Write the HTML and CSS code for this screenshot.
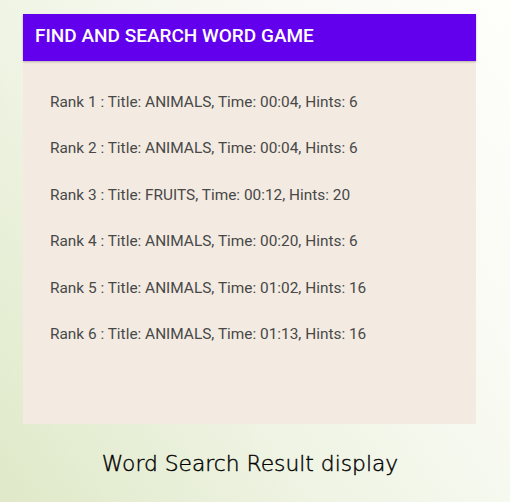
FILE: index.html
```html
<!DOCTYPE html>
<html>
<head>
<meta charset="utf-8">
<link rel="stylesheet" href="styles.css">
</head>
<body>
<div class="page">
  <div class="phone">
    <div class="appbar">FIND AND SEARCH WORD GAME</div>
    <div class="list">
      <div class="row">Rank 1 : Title: ANIMALS, Time: 00:04, Hints: 6</div>
      <div class="row">Rank 2 : Title: ANIMALS, Time: 00:04, Hints: 6</div>
      <div class="row">Rank 3 : Title: FRUITS, Time: 00:12, Hints: 20</div>
      <div class="row">Rank 4 : Title: ANIMALS, Time: 00:20, Hints: 6</div>
      <div class="row">Rank 5 : Title: ANIMALS, Time: 01:02, Hints: 16</div>
      <div class="row">Rank 6 : Title: ANIMALS, Time: 01:13, Hints: 16</div>
    </div>
  </div>
  <div class="caption">Word Search Result display</div>
</div>
</body>
</html>
```

FILE: styles.css
```css
html, body {
  margin: 0;
  padding: 0;
}
body {
  width: 510px;
  height: 502px;
  overflow: hidden;
  background: linear-gradient(55deg, #dfe9c8 0%, #eef3e2 35%, #f8faf2 65%, #fefefb 100%);
}
.page {
  padding-top: 14px;
  padding-left: 23px;
}
.phone {
  width: 453px;
  height: 410px;
  background: #f3ebe1;
  display: flex;
  flex-direction: column;
}
.appbar {
  height: 47px;
  background: #6200ee;
  color: #fff;
  font-family: Roboto, "Liberation Sans", sans-serif;
  font-weight: 500;
  font-size: 19px;
  line-height: 44px;
  padding-left: 12px;
  box-shadow: 0 1px 2px rgba(0,0,0,0.25);
}
.list {
  padding-top: 31px;
  padding-left: 27px;
  display: flex;
  flex-direction: column;
}
.row {
  height: 46.4px;
  font-family: Roboto, "Liberation Sans", sans-serif;
  font-size: 15.4px;
  color: #484848;
  line-height: 20px;
}
.caption {
  width: 500px;
  text-align: center;
  margin-left: -23px;
  margin-top: 27px;
  font-family: "DejaVu Sans", sans-serif;
  font-weight: 300;
  font-size: 21.8px;
  color: #000;
  -webkit-text-stroke: 0.4px #000;
}
```
